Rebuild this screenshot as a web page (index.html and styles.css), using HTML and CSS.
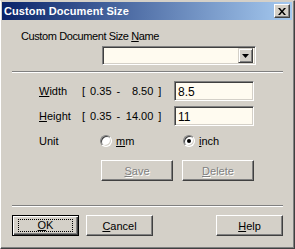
FILE: index.html
```html
<!DOCTYPE html>
<html>
  <head>
    <title>Custom Document Size</title>
    <link rel="stylesheet" href="styles.css">
  </head>
  <body>
    <div class="window">
      <div class="titlebar">
        <span class="title">Custom Document Size</span>
        <div class="closeBtn">
          <svg width="8" height="7" viewBox="0 0 8 7">
            <path d="M0 0h2l2 2.5 2-2.5h2L5 3.5 8 7H6L4 4.5 2 7H0l3-3.5z" fill="#000"/>
          </svg>
        </div>
      </div>

      <div class="content">
        <div class="nameLabel">Custom Document Size <u>N</u>ame</div>
        <div class="combo">
          <div class="comboField"></div>
          <div class="comboBtn">
            <svg width="7" height="4" viewBox="0 0 7 4"><path d="M0 0h7L3.5 4z" fill="#000"/></svg>
          </div>
        </div>

        <div class="separator"></div>

        <div class="sizeGrid">
          <div class="fieldLabel"><u>W</u>idth</div>
          <div class="range">[ 0.35 - <span class="rangeMax">8.50</span> ]</div>
          <div class="textBox">8.5</div>

          <div class="fieldLabel"><u>H</u>eight</div>
          <div class="range">[ 0.35 - <span class="rangeMax">14.00</span> ]</div>
          <div class="textBox">11</div>
        </div>

        <div class="unitRow">
          <div class="unitLabel">Unit</div>
          <div class="radioOption">
            <span class="radio"></span><span><u>m</u>m</span>
          </div>
          <div class="radioOption">
            <span class="radio checked"></span><span><u>i</u>nch</span>
          </div>
        </div>

        <div class="actionRow">
          <div class="btn disabled"><span><u>S</u>ave</span></div>
          <div class="btn disabled"><span><u>D</u>elete</span></div>
        </div>

        <div class="separator bottomSep"></div>

        <div class="footer">
          <div class="btn default"><span class="focus"><u>O</u>K</span></div>
          <div class="btn"><span><u>C</u>ancel</span></div>
          <div class="btn help"><span><u>H</u>elp</span></div>
        </div>
      </div>
    </div>
  </body>
</html>
```

FILE: styles.css
```css
/* General Styles */
body {
  margin: 0;
  padding: 0;
  font-family: "Liberation Sans", Arial, sans-serif;
  font-size: 11px;
  color: #000000;
  background: #d4d0c8;
}

.window {
  box-sizing: border-box;
  width: 295px;
  height: 249px;
  background: #d4d0c8;
  border-left: 1px solid #ffffff;
  border-top: 1px solid #d4d0c8;
  border-right: 1px solid #404040;
  border-bottom: 1px solid #404040;
  box-shadow: inset -1px -1px #808080;
  padding: 1px 2px 2px 1px;
}

/* Title Bar */
.titlebar {
  height: 18px;
  display: flex;
  align-items: center;
  justify-content: space-between;
  background: linear-gradient(to right, #0a246a, #a6caf0);
  padding: 0 2px 0 2px;
}

.title {
  color: #ffffff;
  font-weight: bold;
  font-size: 11px;
  letter-spacing: 0.1px;
}

.closeBtn {
  box-sizing: border-box;
  width: 16px;
  height: 14px;
  background: #d4d0c8;
  border: 1px solid;
  border-color: #ffffff #404040 #404040 #ffffff;
  box-shadow: inset -1px -1px #808080;
  display: flex;
  align-items: center;
  justify-content: center;
}

/* Content */
.content {
  padding: 0 9px 0 10px;
}

.nameLabel {
  margin: 10px 0 0 9px;
  line-height: 13px;
  letter-spacing: -0.4px;
}

.combo {
  box-sizing: border-box;
  display: flex;
  width: 154px;
  height: 19px;
  margin: 3px 0 0 90px;
  border: 1px solid;
  border-color: #808080 #ffffff #ffffff #808080;
  box-shadow: inset 1px 1px #404040, inset -1px -1px #d4d0c8;
  background: #fffbf0;
  padding: 2px 2px 1px 2px;
}

.comboField {
  flex: 1;
}

.comboBtn {
  box-sizing: border-box;
  width: 15px;
  height: 15px;
  margin-top: -1px;
  background: #d4d0c8;
  border: 1px solid;
  border-color: #d4d0c8 #404040 #404040 #d4d0c8;
  box-shadow: inset 1px 1px #ffffff, inset -1px -1px #808080;
  display: flex;
  align-items: center;
  justify-content: center;
}

.separator {
  height: 0;
  border-top: 1px solid #808080;
  border-bottom: 1px solid #ffffff;
  margin-top: 6px;
}

/* Size Fields */
.sizeGrid {
  display: grid;
  grid-template-columns: 43px 92px 80px;
  grid-auto-rows: 20px;
  row-gap: 5px;
  align-items: center;
  margin: 8px 0 0 27px;
}

.range {
  white-space: pre;
  word-spacing: 2px;
}

.rangeMax {
  display: inline-block;
  width: 28px;
  text-align: right;
}

.textBox {
  box-sizing: border-box;
  height: 20px;
  border: 1px solid;
  border-color: #808080 #ffffff #ffffff #808080;
  box-shadow: inset 1px 1px #404040, inset -1px -1px #d4d0c8;
  background: #fffbf0;
  padding: 3px 3px 0 3px;
  font-size: 12px;
}

/* Unit Radios */
.unitRow {
  display: flex;
  align-items: center;
  height: 20px;
  margin: 5px 0 0 27px;
}

.unitLabel {
  width: 61px;
}

.radioOption {
  display: flex;
  align-items: center;
  gap: 4px;
  width: 83px;
}

.radio {
  box-sizing: border-box;
  width: 12px;
  height: 12px;
  border-radius: 50%;
  border: 1px solid;
  border-color: #808080 #ffffff #ffffff #808080;
  box-shadow: inset 1px 1px #404040, inset -1px -1px #d4d0c8;
  background: #ffffff;
  display: flex;
  align-items: center;
  justify-content: center;
}

.radio.checked::after {
  content: "";
  width: 4px;
  height: 4px;
  border-radius: 50%;
  background: #000000;
}

/* Buttons */
.btn {
  box-sizing: border-box;
  width: 72px;
  height: 21px;
  background: #d4d0c8;
  border: 1px solid;
  border-color: #ffffff #404040 #404040 #ffffff;
  box-shadow: inset -1px -1px #808080;
  display: flex;
  align-items: center;
  justify-content: center;
}

.btn.disabled {
  color: #808080;
  text-shadow: 1px 1px #ffffff;
}

.actionRow {
  display: flex;
  gap: 9px;
  margin: 9px 0 0 89px;
}

.bottomSep {
  margin-top: 24px;
}

.footer {
  display: flex;
  gap: 7px;
  margin-top: 8px;
}

.footer .btn {
  width: 67px;
}

.footer .help {
  margin-left: auto;
}

.btn.default {
  border-color: #000000;
  box-shadow: inset 1px 1px #ffffff, inset -1px -1px #404040, inset -2px -2px #808080;
}

.focus {
  box-sizing: border-box;
  width: 55px;
  height: 13px;
  border: 1px dotted #000000;
  text-align: center;
  line-height: 11px;
}
```
